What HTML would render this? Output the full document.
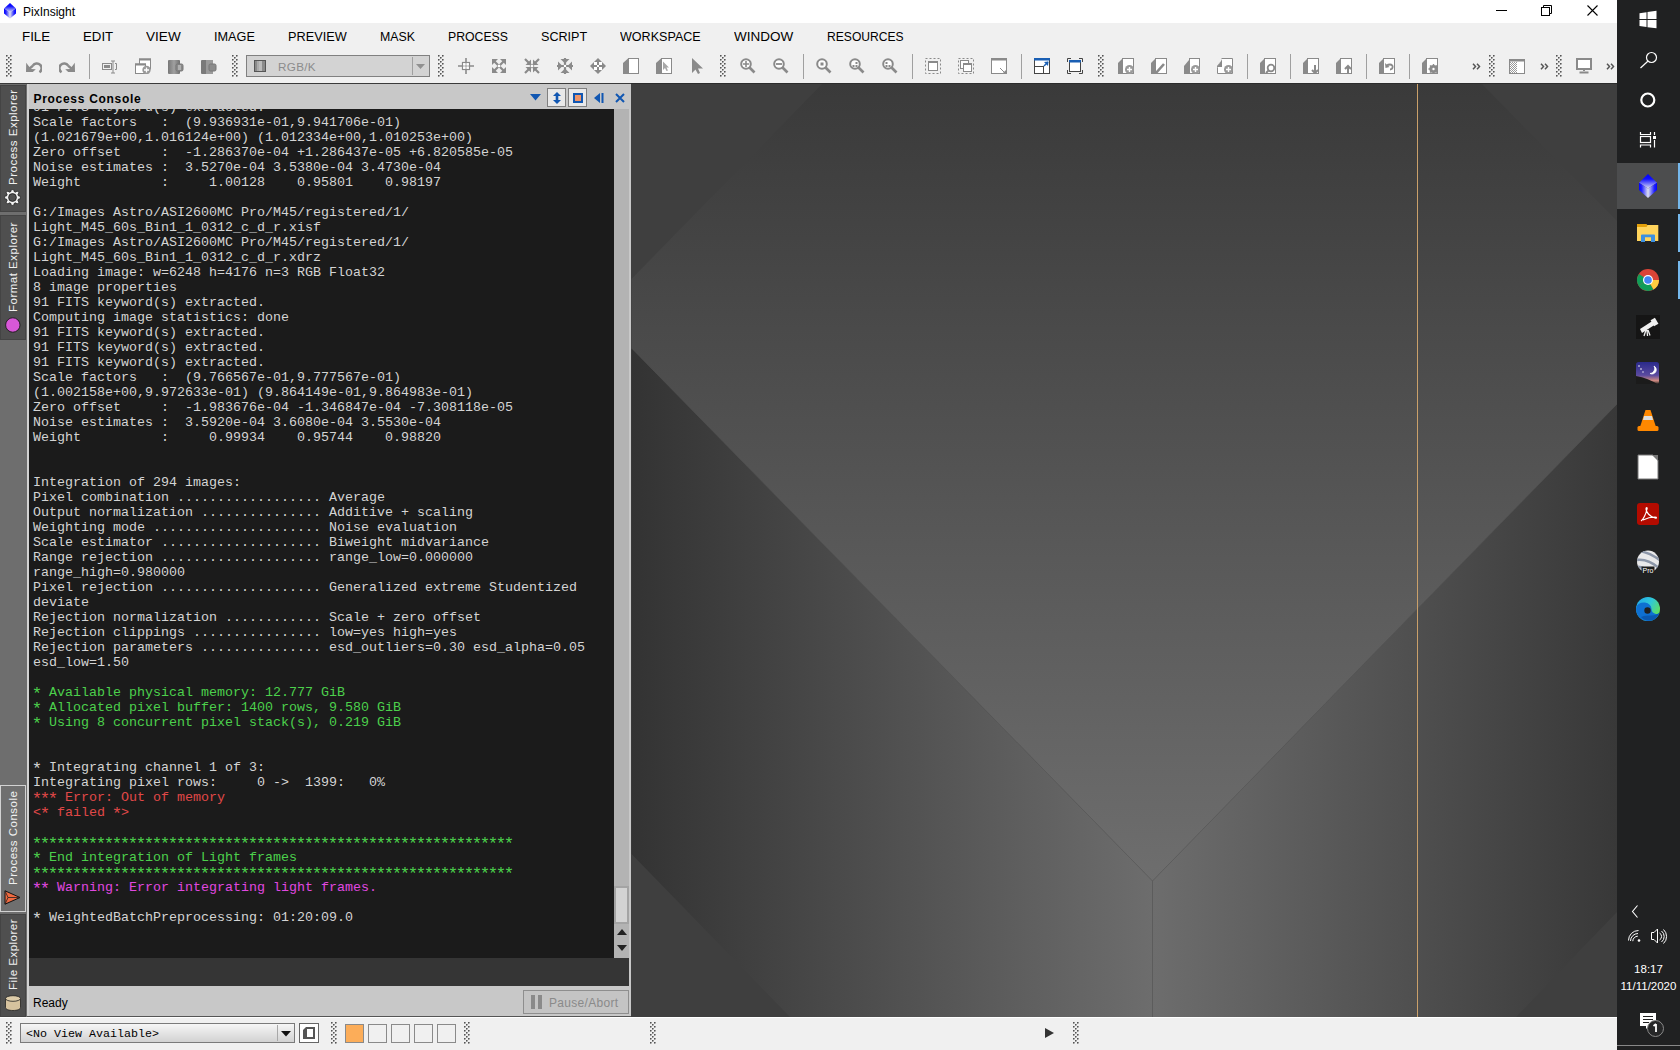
<!DOCTYPE html>
<html><head><meta charset="utf-8">
<style>
*{box-sizing:border-box}
html,body{margin:0;padding:0}
body{width:1680px;height:1050px;overflow:hidden;position:relative;background:#f0f0f0;font-family:"Liberation Sans",sans-serif}
.a{position:absolute}
#title{left:0;top:0;width:1617px;height:23px;background:#fff}
#title .t{left:23px;top:5px;font-size:12px;color:#000}
#menu{left:0;top:23px;width:1617px;height:60px;background:#f0f0f0}
.mi{position:absolute;top:6px;font-size:13px;color:#000;white-space:nowrap}
#taskbar{left:1617px;top:0;width:63px;height:1050px;background:#202122}
#left{left:0;top:83px;width:27px;height:934px;background:#6e6e6e;border-top:1px solid #3a3a3a}
.tab{left:0;width:26px;background:#4f4f4f;border:1px solid #444}
.tab.sel{background:#6f6f6f;border:1px solid #d2d2d2}
.vt{transform:rotate(-90deg);transform-origin:0 0;font-size:11.5px;letter-spacing:0.5px;color:#f0f0f0;white-space:nowrap;line-height:14px}
#panel{left:27px;top:83px;width:604px;height:934px;background:#c8c8c8}
#console{left:29px;top:109px;width:585px;height:849px;background:#1b1b1b;overflow:hidden}
#console pre{position:absolute;left:4px;top:-9px;margin:0;font-family:"Liberation Mono",monospace;font-size:13.333px;line-height:15px;color:#d4d4d4}
.s{font-style:normal;display:inline-block;width:8px;transform:translateY(2.3px) scale(1.3)}
.g{color:#4cd04c}.r{color:#e04848}.m{color:#e048e0}
#ws{left:631px;top:83px;width:986px;height:934px;background:#3e3e3e;overflow:hidden}
.grip{width:6px;background-image:linear-gradient(45deg,#666 25%,transparent 25%,transparent 75%,#666 75%),linear-gradient(45deg,#666 25%,#fff 25%,#fff 75%,#666 75%);background-size:4px 4px;background-position:0 0,2px 2px}
.pbtn{width:19px;height:19px;background:#e9e9e9;border:1px solid #808080}
.sq{top:7px;width:19px;height:19px;border:1px solid #8a8a8a;background:#f0f0f0}
#bottom{left:0;top:1017px;width:1617px;height:33px;background:#f0f0f0}
</style></head><body>
<div id="title" class="a"><div class="a t">PixInsight</div>
<svg class="a" style="left:0;top:0" width="22" height="22" viewBox="0 0 22 22"><defs><linearGradient id="c1t" x1="0" y1="0" x2="0" y2="1"><stop offset="0" stop-color="#0000ff"/><stop offset="0.35" stop-color="#1010ff"/><stop offset="1" stop-color="#d8dcf4"/></linearGradient><linearGradient id="c1l" x1="0" y1="0" x2="1" y2="0"><stop offset="0" stop-color="#0000ff"/><stop offset="0.3" stop-color="#2020ff"/><stop offset="1" stop-color="#dde0f2"/></linearGradient><linearGradient id="c1r" x1="1" y1="0" x2="0" y2="0"><stop offset="0" stop-color="#0000ff"/><stop offset="0.3" stop-color="#2020ff"/><stop offset="1" stop-color="#dde0f2"/></linearGradient></defs><polygon points="10.00,3.00 16.00,8.58 10.00,12.30 4.00,8.58" fill="url(#c1t)"/><polygon points="4.00,8.58 10.00,12.30 10.00,18.50 4.00,13.38" fill="url(#c1l)"/><polygon points="16.00,8.58 10.00,12.30 10.00,18.50 16.00,13.38" fill="url(#c1r)"/></svg>
<svg class="a" style="left:1496px;top:10px" width="11" height="1"><rect width="11" height="1" fill="#000"/></svg>
<svg class="a" style="left:1541px;top:5px" width="11" height="11" viewBox="0 0 11 11"><rect x="0.5" y="2.5" width="8" height="8" fill="none" stroke="#000"/><path d="M2.5 2.5V0.5h8v8h-2" fill="none" stroke="#000"/></svg>
<svg class="a" style="left:1587px;top:5px" width="11" height="11" viewBox="0 0 11 11"><path d="M0.5 0.5L10.5 10.5M10.5 0.5L0.5 10.5" stroke="#000" stroke-width="1.1"/></svg>
</div>
<div id="menu" class="a">
<span class="mi" style="left:22px;transform:scaleX(1.027);transform-origin:0 0">FILE</span>
<span class="mi" style="left:83px;transform:scaleX(1.019);transform-origin:0 0">EDIT</span>
<span class="mi" style="left:146px;transform:scaleX(1.044);transform-origin:0 0">VIEW</span>
<span class="mi" style="left:214px;transform:scaleX(0.977);transform-origin:0 0">IMAGE</span>
<span class="mi" style="left:288px;transform:scaleX(0.979);transform-origin:0 0">PREVIEW</span>
<span class="mi" style="left:380px;transform:scaleX(0.949);transform-origin:0 0">MASK</span>
<span class="mi" style="left:448px;transform:scaleX(0.943);transform-origin:0 0">PROCESS</span>
<span class="mi" style="left:541px;transform:scaleX(0.969);transform-origin:0 0">SCRIPT</span>
<span class="mi" style="left:620px;transform:scaleX(0.966);transform-origin:0 0">WORKSPACE</span>
<span class="mi" style="left:734px;transform:scaleX(1.038);transform-origin:0 0">WINDOW</span>
<span class="mi" style="left:827px;transform:scaleX(0.931);transform-origin:0 0">RESOURCES</span>
</div>
<svg width="0" height="0" style="position:absolute"><defs><pattern id="grp" width="4" height="4" patternUnits="userSpaceOnUse"><rect x="0" y="0" width="1.6" height="1.6" fill="#555"/><rect x="1.6" y="1.6" width="0.8" height="0.8" fill="#fff"/><rect x="2" y="2" width="1.6" height="1.6" fill="#555"/><rect x="3.6" y="3.6" width="0.4" height="0.4" fill="#fff"/></pattern><pattern id="chk" width="2" height="2" patternUnits="userSpaceOnUse"><rect width="2" height="2" fill="#fff"/><rect width="1" height="1" fill="#999"/><rect x="1" y="1" width="1" height="1" fill="#999"/></pattern></defs></svg>
<svg class="a" style="left:6px;top:55px" width="6" height="22"><rect width="6" height="22" fill="url(#grp)"/></svg>
<svg class="a" style="left:26px;top:58px" width="16" height="16" viewBox="0 0 16 16"><path d="M6.85 7.7A4.75 4.75 0 1 1 13.45 14.2" stroke="#8a8a8a" stroke-width="2.5" fill="none"/><path d="M3 11L7 7.6" stroke="#8a8a8a" stroke-width="2.5"/><polygon points="0,14 0.2,4.8 4.9,11.1 9.8,11.2 6.8,14" fill="#8a8a8a"/></svg>
<svg class="a" style="left:59px;top:58px" width="16" height="16" viewBox="0 0 16 16"><g transform="translate(16 0) scale(-1 1)"><path d="M6.85 7.7A4.75 4.75 0 1 1 13.45 14.2" stroke="#8a8a8a" stroke-width="2.5" fill="none"/><path d="M3 11L7 7.6" stroke="#8a8a8a" stroke-width="2.5"/><polygon points="0,14 0.2,4.8 4.9,11.1 9.8,11.2 6.8,14" fill="#8a8a8a"/></g></svg>
<div class="a" style="left:89px;top:54px;width:1px;height:25px;background:#a0a0a0"></div>
<svg class="a" style="left:102px;top:58px" width="16" height="16" viewBox="0 0 16 16"><rect x="0.5" y="5.5" width="9" height="6" fill="none" stroke="#8a8a8a"/><rect x="2" y="7" width="6" height="3" fill="#8a8a8a"/><path d="M9 3h4M11 3v12M9 15h4M13 5.5h1.5v6H13" stroke="#8a8a8a" stroke-width="1" fill="none"/></svg>
<svg class="a" style="left:135px;top:58px" width="16" height="16" viewBox="0 0 16 16"><rect x="4.5" y="1" width="11" height="10" fill="#fff" stroke="#8a8a8a"/><rect x="4" y="0.5" width="12" height="2" fill="#8a8a8a"/><rect x="0.5" y="6" width="10" height="9.5" fill="#fff" stroke="#8a8a8a"/><rect x="0" y="5.5" width="11" height="2" fill="#8a8a8a"/><circle cx="11.5" cy="12" r="4.2" fill="#999"/><path d="M9 12h5M11.5 9.5v5" stroke="#fff" stroke-width="1.3"/></svg>
<svg class="a" style="left:168px;top:58px" width="16" height="16" viewBox="0 0 16 16"><defs><linearGradient id="dg1" x1="0" x2="1"><stop offset="0" stop-color="#777"/><stop offset=".5" stop-color="#a0a0a0"/><stop offset="1" stop-color="#707070"/></linearGradient></defs><rect x="0" y="2" width="12" height="14" rx="1" fill="url(#dg1)"/><rect x="8" y="6" width="7" height="7" rx="1.5" fill="#8a8a8a" stroke="#777"/><rect x="10" y="7" width="3" height="5" fill="#b0b0b0"/></svg>
<svg class="a" style="left:201px;top:58px" width="16" height="16" viewBox="0 0 16 16"><rect x="0" y="2" width="12" height="14" rx="1" fill="#7a7a7a"/><rect x="5" y="2" width="7" height="14" fill="#9a9a9a"/><rect x="8" y="6" width="7" height="7" rx="1.5" fill="#8c8c8c" stroke="#777"/></svg>
<svg class="a" style="left:232px;top:55px" width="6" height="22"><rect width="6" height="22" fill="url(#grp)"/></svg>
<div class="a" style="left:246px;top:55px;width:184px;height:22px;background:#d3d3d3;border:1px solid #808080"></div>
<svg class="a" style="left:254px;top:60px" width="12" height="12" viewBox="0 0 12 12"><rect x="0.5" y="0.5" width="11" height="11" fill="#8a8a8a" stroke="#555"/><rect x="3" y="1" width="2" height="10" fill="#aaa"/><rect x="5" y="1" width="3" height="10" fill="#bbb"/></svg>
<div class="a" style="left:278px;top:60px;font-size:11.7px;letter-spacing:0.3px;color:#8c8c8c">RGB/K</div>
<div class="a" style="left:412px;top:57px;width:1px;height:18px;background:#a0a0a0"></div>
<svg class="a" style="left:416px;top:64px" width="9" height="5" viewBox="0 0 9 5"><polygon points="0,0 9,0 4.5,5" fill="#909090"/></svg>
<svg class="a" style="left:438px;top:55px" width="6" height="22"><rect width="6" height="22" fill="url(#grp)"/></svg>
<svg class="a" style="left:458px;top:58px" width="16" height="16" viewBox="0 0 16 16"><path d="M0 8h16M8 0v16" stroke="#8a8a8a" stroke-width="1.6"/><rect x="4.5" y="4.5" width="7" height="7" fill="none" stroke="#8a8a8a" stroke-width="1.2"/><rect x="5.2" y="5.2" width="2.4" height="2.4" fill="#fff"/><rect x="8.4" y="5.2" width="2.4" height="2.4" fill="#fff"/><rect x="5.2" y="8.4" width="2.4" height="2.4" fill="#fff"/><rect x="8.4" y="8.4" width="2.4" height="2.4" fill="#fff"/></svg>
<svg class="a" style="left:491px;top:58px" width="16" height="16" viewBox="0 0 16 16"><polygon points="1,1 7,1 1,7" fill="#8a8a8a"/><polygon points="15,1 9,1 15,7" fill="#8a8a8a"/><polygon points="1,15 7,15 1,9" fill="#8a8a8a"/><polygon points="15,15 9,15 15,9" fill="#8a8a8a"/><path d="M3 3L13 13M13 3L3 13" stroke="#8a8a8a" stroke-width="2.2"/><rect x="6.8" y="6.8" width="2.4" height="2.4" fill="#fff"/></svg>
<svg class="a" style="left:524px;top:58px" width="16" height="16" viewBox="0 0 16 16"><polygon points="7,7 7,1.5 1.5,7" fill="#8a8a8a"/><polygon points="9,7 9,1.5 14.5,7" fill="#8a8a8a"/><polygon points="7,9 7,14.5 1.5,9" fill="#8a8a8a"/><polygon points="9,9 9,14.5 14.5,9" fill="#8a8a8a"/><path d="M1 1L15 15M15 1L1 15" stroke="#8a8a8a" stroke-width="2.2"/><rect x="6.8" y="6.8" width="2.4" height="2.4" fill="#fff"/></svg>
<svg class="a" style="left:557px;top:58px" width="16" height="16" viewBox="0 0 16 16"><polygon points="3.5,1 12.5,1 8,5.5" fill="#8a8a8a"/><polygon points="3.5,15 12.5,15 8,10.5" fill="#8a8a8a"/><polygon points="1,3.5 1,12.5 5.5,8" fill="#8a8a8a"/><polygon points="15,3.5 15,12.5 10.5,8" fill="#8a8a8a"/><path d="M8 0v16M0 8h16" stroke="#8a8a8a" stroke-width="2.2"/><rect x="6.9" y="6.9" width="2.2" height="2.2" fill="#fff"/></svg>
<svg class="a" style="left:590px;top:58px" width="16" height="16" viewBox="0 0 16 16"><polygon points="8,0 16,8 8,16 0,8" fill="#8a8a8a"/><rect x="4" y="4" width="3" height="3" fill="#fff"/><rect x="9" y="4" width="3" height="3" fill="#fff"/><rect x="4" y="9" width="3" height="3" fill="#fff"/><rect x="9" y="9" width="3" height="3" fill="#fff"/><rect x="7" y="7" width="2" height="2" fill="#fff"/></svg>
<svg class="a" style="left:623px;top:58px" width="16" height="16" viewBox="0 0 16 16"><polygon points="0,5 5,0.5 5,16 0,16" fill="#8a8a8a"/><rect x="5.5" y="0.5" width="10" height="15" fill="#fff" stroke="#8a8a8a"/></svg>
<svg class="a" style="left:656px;top:58px" width="16" height="16" viewBox="0 0 16 16"><polygon points="0,5 5,0.5 5,16 0,16" fill="#8a8a8a"/><rect x="5.5" y="0.5" width="10" height="15" fill="#fff" stroke="#8a8a8a"/><polygon points="7,3.5 7,12 9,10 10.5,13 12,12.5 10.5,9.5 13,9.5" fill="#a8a8a8"/></svg>
<svg class="a" style="left:689px;top:58px" width="16" height="16" viewBox="0 0 16 16"><polygon points="3,0 3,15 6.5,11.5 9,16 11,15 9,10.5 14,10.5" fill="#8a8a8a"/></svg>
<svg class="a" style="left:720px;top:55px" width="6" height="22"><rect width="6" height="22" fill="url(#grp)"/></svg>
<svg class="a" style="left:740px;top:58px" width="16" height="16" viewBox="0 0 16 16"><circle cx="6" cy="6" r="4.8" fill="#fff" stroke="#8a8a8a" stroke-width="2"/><path d="M9.5 9.5L14.5 14.5" stroke="#8a8a8a" stroke-width="2.6"/><path d="M3 6h6M6 3v6" stroke="#8a8a8a" stroke-width="1.6"/></svg>
<svg class="a" style="left:773px;top:58px" width="16" height="16" viewBox="0 0 16 16"><circle cx="6" cy="6" r="4.8" fill="#fff" stroke="#8a8a8a" stroke-width="2"/><path d="M9.5 9.5L14.5 14.5" stroke="#8a8a8a" stroke-width="2.6"/><path d="M3 6h6" stroke="#8a8a8a" stroke-width="1.8"/></svg>
<div class="a" style="left:803px;top:54px;width:1px;height:25px;background:#a0a0a0"></div>
<svg class="a" style="left:816px;top:58px" width="16" height="16" viewBox="0 0 16 16"><circle cx="6" cy="6" r="4.8" fill="#fff" stroke="#8a8a8a" stroke-width="2"/><path d="M9.5 9.5L14.5 14.5" stroke="#8a8a8a" stroke-width="2.6"/><rect x="4.5" y="4.5" width="3" height="3" fill="#8a8a8a"/></svg>
<svg class="a" style="left:849px;top:58px" width="16" height="16" viewBox="0 0 16 16"><circle cx="6" cy="6" r="4.8" fill="#fff" stroke="#8a8a8a" stroke-width="2"/><path d="M9.5 9.5L14.5 14.5" stroke="#8a8a8a" stroke-width="2.6"/><rect x="6.5" y="4" width="2" height="2" fill="#8a8a8a"/><rect x="3.5" y="7" width="2" height="2" fill="#8a8a8a"/><rect x="6.5" y="7" width="2" height="2" fill="#8a8a8a"/></svg>
<svg class="a" style="left:882px;top:58px" width="16" height="16" viewBox="0 0 16 16"><circle cx="6" cy="6" r="4.8" fill="#fff" stroke="#8a8a8a" stroke-width="2"/><path d="M9.5 9.5L14.5 14.5" stroke="#8a8a8a" stroke-width="2.6"/><rect x="3.5" y="4" width="2" height="2" fill="#8a8a8a"/><rect x="3.5" y="7" width="2" height="2" fill="#8a8a8a"/><rect x="6.5" y="7" width="2" height="2" fill="#8a8a8a"/></svg>
<div class="a" style="left:912px;top:54px;width:1px;height:25px;background:#a0a0a0"></div>
<svg class="a" style="left:925px;top:58px" width="16" height="16" viewBox="0 0 16 16"><rect x="0.5" y="0.5" width="15" height="15" fill="none" stroke="#8a8a8a" stroke-dasharray="2 2"/><rect x="3.5" y="3.5" width="9" height="9" fill="#fff" stroke="#8a8a8a"/><rect x="3" y="3" width="10" height="2" fill="#8a8a8a"/></svg>
<svg class="a" style="left:958px;top:58px" width="16" height="16" viewBox="0 0 16 16"><rect x="0.5" y="0.5" width="15" height="15" fill="none" stroke="#8a8a8a" stroke-dasharray="2 2"/><rect x="2.5" y="2.5" width="8" height="8" fill="#fff" stroke="#8a8a8a"/><rect x="5.5" y="5.5" width="8" height="8" fill="#fff" stroke="#8a8a8a"/><rect x="5" y="5" width="9" height="2" fill="#8a8a8a"/></svg>
<svg class="a" style="left:991px;top:58px" width="16" height="16" viewBox="0 0 16 16"><rect x="0.5" y="0.5" width="15" height="15" fill="#fff" stroke="#8a8a8a"/><rect x="0" y="0" width="16" height="2.5" fill="#8a8a8a"/><path d="M9 10l4 4" stroke="#8a8a8a" stroke-width="1"/><polygon points="16,11 16,16 11,16" fill="#8a8a8a"/></svg>
<div class="a" style="left:1021px;top:54px;width:1px;height:25px;background:#a0a0a0"></div>
<svg class="a" style="left:1034px;top:58px" width="16" height="16" viewBox="0 0 16 16"><rect x="0.5" y="0.5" width="15" height="15" fill="#fff" stroke="#444"/><rect x="0" y="0" width="16" height="2.5" fill="#1a5fb4"/><rect x="0.5" y="8.5" width="9" height="7" fill="none" stroke="#444"/><path d="M10 8l4-4" stroke="#1a5fb4" stroke-width="1.5"/><polygon points="10,4 14.5,3.5 14,8" fill="#1a5fb4"/></svg>
<svg class="a" style="left:1067px;top:58px" width="16" height="16" viewBox="0 0 16 16"><path d="M0.5 4V0.5H4M12 0.5h3.5V4M15.5 12v3.5H12M4 15.5H0.5V12" stroke="#444" fill="none"/><rect x="2.5" y="2.5" width="11" height="11" fill="#fff" stroke="#444"/><rect x="2" y="2" width="12" height="2.5" fill="#1a5fb4"/></svg>
<svg class="a" style="left:1098px;top:55px" width="6" height="22"><rect width="6" height="22" fill="url(#grp)"/></svg>
<svg class="a" style="left:1118px;top:58px" width="16" height="16" viewBox="0 0 16 16"><polygon points="0,5 4.5,0.5 4.5,16 0,16" fill="#8a8a8a"/><rect x="4.5" y="0.5" width="11" height="15" fill="#fff" stroke="#8a8a8a"/><circle cx="11.5" cy="11.5" r="4.5" fill="#9a9a9a"/><path d="M9 11.5h5M11.5 9v5" stroke="#fff" stroke-width="1.4"/></svg>
<svg class="a" style="left:1151px;top:58px" width="16" height="16" viewBox="0 0 16 16"><polygon points="0,5 4.5,0.5 4.5,16 0,16" fill="#8a8a8a"/><rect x="4.5" y="0.5" width="11" height="15" fill="#fff" stroke="#8a8a8a"/><path d="M4.5 15.5L13 6" stroke="#8a8a8a" stroke-width="2.6"/><path d="M3.5 16l1.5-2" stroke="#8a8a8a" stroke-width="1"/></svg>
<svg class="a" style="left:1184px;top:58px" width="16" height="16" viewBox="0 0 16 16"><polygon points="0,8 5,2 5,16 0,16" fill="#8a8a8a"/><rect x="5.5" y="0.5" width="10" height="15" fill="#fff" stroke="#8a8a8a"/><circle cx="11.5" cy="11.5" r="4.5" fill="#9a9a9a"/><path d="M9 11.5h5M11.5 9v5" stroke="#fff" stroke-width="1.4"/></svg>
<svg class="a" style="left:1217px;top:58px" width="16" height="16" viewBox="0 0 16 16"><polygon points="0,8 4,3 4,10 0,10" fill="#8a8a8a"/><path d="M4.5 0.5h11v15h-15v-6" fill="#fff" stroke="#8a8a8a"/><polygon points="0,9 4,3 5,1 5,9" fill="#8a8a8a"/><circle cx="11.5" cy="11.5" r="4.5" fill="#9a9a9a"/><path d="M9 11.5h5M11.5 9v5" stroke="#fff" stroke-width="1.4"/></svg>
<div class="a" style="left:1247px;top:54px;width:1px;height:25px;background:#a0a0a0"></div>
<svg class="a" style="left:1260px;top:58px" width="16" height="16" viewBox="0 0 16 16"><polygon points="0,5 4.5,0.5 4.5,16 0,16" fill="#8a8a8a"/><rect x="4.5" y="0.5" width="11" height="15" fill="#fff" stroke="#8a8a8a"/><circle cx="11" cy="10" r="3.3" fill="#fff" stroke="#8a8a8a" stroke-width="1.8"/><path d="M8.5 12.5L6 15" stroke="#8a8a8a" stroke-width="2"/></svg>
<div class="a" style="left:1290px;top:54px;width:1px;height:25px;background:#a0a0a0"></div>
<svg class="a" style="left:1303px;top:58px" width="16" height="16" viewBox="0 0 16 16"><polygon points="0,5 4.5,0.5 4.5,16 0,16" fill="#8a8a8a"/><rect x="4.5" y="0.5" width="11" height="15" fill="#fff" stroke="#8a8a8a"/><path d="M12 7v8M9 12l3 3 3-3" stroke="#8a8a8a" stroke-width="2" fill="none"/></svg>
<svg class="a" style="left:1336px;top:58px" width="16" height="16" viewBox="0 0 16 16"><polygon points="0,5 4.5,0.5 4.5,16 0,16" fill="#8a8a8a"/><rect x="4.5" y="0.5" width="11" height="15" fill="#fff" stroke="#8a8a8a"/><path d="M12 16V8M9 11l3-3 3 3" stroke="#8a8a8a" stroke-width="2" fill="none"/></svg>
<div class="a" style="left:1366px;top:54px;width:1px;height:25px;background:#a0a0a0"></div>
<svg class="a" style="left:1379px;top:58px" width="16" height="16" viewBox="0 0 16 16"><polygon points="0,5 4.5,0.5 4.5,16 0,16" fill="#8a8a8a"/><rect x="4.5" y="0.5" width="11" height="15" fill="#fff" stroke="#8a8a8a"/><path d="M11 11.5c3 0 4-5 0-5-2 0-3 1-3 1" stroke="#8a8a8a" stroke-width="1.8" fill="none"/><polygon points="6,5 6.5,10 10.5,9" fill="#8a8a8a"/></svg>
<div class="a" style="left:1409px;top:54px;width:1px;height:25px;background:#a0a0a0"></div>
<svg class="a" style="left:1422px;top:58px" width="16" height="16" viewBox="0 0 16 16"><polygon points="0,5 4.5,0.5 4.5,16 0,16" fill="#8a8a8a"/><rect x="4.5" y="0.5" width="11" height="15" fill="#fff" stroke="#8a8a8a"/><circle cx="11.5" cy="11" r="3" fill="none" stroke="#8a8a8a" stroke-width="2.2"/><path d="M11.5 6v10M6.5 11h10M8 7.5l7 7M15 7.5l-7 7" stroke="#8a8a8a" stroke-width="1.4"/><circle cx="11.5" cy="11" r="1.2" fill="#fff"/></svg>
<svg class="a" style="left:1472px;top:63px" width="9" height="7" viewBox="0 0 9 7"><path d="M1 0.8l2.5 2.7L1 6.2M5 0.8l2.5 2.7L5 6.2" stroke="#555" stroke-width="1.5" fill="none"/></svg>
<svg class="a" style="left:1489px;top:55px" width="6" height="22"><rect width="6" height="22" fill="url(#grp)"/></svg>
<svg class="a" style="left:1509px;top:59px" width="16" height="16" viewBox="0 0 16 16"><rect x="0.5" y="0.5" width="15" height="14" fill="#fff" stroke="#8a8a8a"/><rect x="0" y="0" width="16" height="2.5" fill="#8a8a8a"/><rect x="1" y="3" width="7" height="11" fill="url(#chk)"/></svg>
<svg class="a" style="left:1540px;top:63px" width="9" height="7" viewBox="0 0 9 7"><path d="M1 0.8l2.5 2.7L1 6.2M5 0.8l2.5 2.7L5 6.2" stroke="#555" stroke-width="1.5" fill="none"/></svg>
<svg class="a" style="left:1556px;top:55px" width="6" height="22"><rect width="6" height="22" fill="url(#grp)"/></svg>
<svg class="a" style="left:1576px;top:58px" width="16" height="16" viewBox="0 0 16 16"><rect x="1" y="1" width="14" height="10" fill="#fff" stroke="#8a8a8a" stroke-width="2"/><rect x="7" y="11" width="2" height="2" fill="#8a8a8a"/><rect x="3.5" y="13.5" width="9" height="2" fill="#8a8a8a"/></svg>
<svg class="a" style="left:1606px;top:63px" width="9" height="7" viewBox="0 0 9 7"><path d="M1 0.8l2.5 2.7L1 6.2M5 0.8l2.5 2.7L5 6.2" stroke="#555" stroke-width="1.5" fill="none"/></svg>
<div id="left" class="a">
<div class="a tab" style="top:1px;height:127px"></div>
<div class="a tab" style="top:131px;height:124.6px"></div>
<div class="a tab sel" style="top:701px;height:127px"></div>
<div class="a tab" style="top:830px;height:103px"></div>
<div class="a vt" style="left:6px;top:101px">Process Explorer</div>
<div class="a vt" style="left:6px;top:228px">Format Explorer</div>
<div class="a vt" style="left:6px;top:801px">Process Console</div>
<div class="a vt" style="left:6px;top:906px">File Explorer</div>
<svg class="a" style="left:4px;top:105px" width="17" height="17" viewBox="0 0 17 17"><polygon points="16.40,7.25 16.40,9.75 14.51,10.04 13.84,11.66 14.97,13.20 13.20,14.97 11.66,13.84 10.04,14.51 9.75,16.40 7.25,16.40 6.96,14.51 5.34,13.84 3.80,14.97 2.03,13.20 3.16,11.66 2.49,10.04 0.60,9.75 0.60,7.25 2.49,6.96 3.16,5.34 2.03,3.80 3.80,2.03 5.34,3.16 6.96,2.49 7.25,0.60 9.75,0.60 10.04,2.49 11.66,3.16 13.20,2.03 14.97,3.80 13.84,5.34 14.51,6.96" fill="#f2f2f2" stroke="#1a1a1a" stroke-width="0.7"/><circle cx="8.5" cy="8.5" r="3.9" fill="#4f4f4f" stroke="#1a1a1a" stroke-width="0.8"/></svg>
<svg class="a" style="left:4.5px;top:233px" width="16" height="16" viewBox="0 0 16 16"><circle cx="7.8" cy="8" r="7.2" fill="#d858d8" stroke="#111" stroke-width="0.8"/></svg>
<svg class="a" style="left:4px;top:806px" width="17" height="15" viewBox="0 0 17 15"><polygon points="1,0.8 16,7.5 1,14.2" fill="#f06a40" stroke="#111" stroke-width="1"/><path d="M1 0.8L4 7.5L1 14.2M4 7.5H16" stroke="#222" stroke-width="0.8" fill="none"/></svg>
<svg class="a" style="left:5px;top:911px" width="16" height="16" viewBox="0 0 16 16"><path d="M0.5 3.5v9c0 1.8 3.3 3 7.5 3s7.5-1.2 7.5-3v-9" fill="#d6c29e" stroke="#222" stroke-width="0.8"/><ellipse cx="8" cy="3.5" rx="7.5" ry="2.8" fill="#dccba8" stroke="#222" stroke-width="0.8"/></svg>
</div>
<div id="panel" class="a">
<div class="a" style="left:0;top:0;width:604px;height:1px;background:#3a3a3a"></div>
<div class="a" style="left:0;top:1px;width:2px;height:933px;background:#d2d2d2"></div>
<div class="a" style="left:6.5px;top:9px;font-weight:bold;font-size:12px;letter-spacing:0.7px">Process Console</div>
<svg class="a" style="left:503px;top:11px" width="12" height="7" viewBox="0 0 12 7"><polygon points="0,0 11,0 5.5,6.5" fill="#1157b2"/></svg>
<div class="a pbtn" style="left:520px;top:5px"></div>
<svg class="a" style="left:526px;top:9px" width="8" height="12" viewBox="0 0 8 12"><polygon points="4,0 8,4 5.3,4 5.3,8 8,8 4,12 0,8 2.7,8 2.7,4 0,4" fill="#1157b2"/></svg>
<div class="a pbtn" style="left:541px;top:5px"></div>
<svg class="a" style="left:546px;top:10px" width="10" height="10" viewBox="0 0 10 10"><rect x="1" y="1" width="8" height="8" fill="#ee9468" stroke="#1157b2" stroke-width="2"/></svg>
<svg class="a" style="left:567px;top:10px" width="10" height="10" viewBox="0 0 10 10"><polygon points="0,5 6,0 6,10" fill="#1157b2"/><rect x="7.5" y="0" width="2" height="10" fill="#1157b2"/></svg>
<svg class="a" style="left:588px;top:10px" width="10" height="10" viewBox="0 0 10 10"><path d="M1 1L9 9M9 1L1 9" stroke="#1157b2" stroke-width="2"/></svg>
<div class="a" style="left:587px;top:26px;width:15px;height:849px;background:#b3b3b3"></div>
<div class="a" style="left:587px;top:803px;width:15px;height:38px;background:#d3d3d3;border:2px solid #a4a4a4"></div>
<svg class="a" style="left:590px;top:846px" width="10" height="6" viewBox="0 0 10 6"><polygon points="0,6 10,6 5,0" fill="#222"/></svg>
<svg class="a" style="left:590px;top:862px" width="10" height="6" viewBox="0 0 10 6"><polygon points="0,0 10,0 5,6" fill="#222"/></svg>
<div class="a" style="left:2px;top:875px;width:600px;height:28px;background:#353535"></div>
<div class="a" style="left:6px;top:913px;font-size:12px;color:#000">Ready</div>
<div class="a" style="left:496px;top:907px;width:106px;height:24px;border:1px solid #8e8e8e;background:#c4c4c4"></div>
<div class="a" style="left:504px;top:912px;width:4px;height:14px;background:#8a8a8a"></div>
<div class="a" style="left:511px;top:912px;width:4px;height:14px;background:#8a8a8a"></div>
<div class="a" style="left:522px;top:913px;font-size:12px;letter-spacing:0.3px;color:#8a8a8a">Pause/Abort</div>
<div class="a" style="left:0;top:933px;width:604px;height:1px;background:#555"></div>
</div>
<div id="console" class="a"><pre>91 FITS keyword(s) extracted.
Scale factors   :  (9.936931e-01,9.941706e-01)
(1.021679e+00,1.016124e+00) (1.012334e+00,1.010253e+00)
Zero offset     :  -1.286370e-04 +1.286437e-05 +6.820585e-05
Noise estimates :  3.5270e-04 3.5380e-04 3.4730e-04
Weight          :     1.00128    0.95801    0.98197

G:/Images Astro/ASI2600MC Pro/M45/registered/1/
Light_M45_60s_Bin1_1_0312_c_d_r.xisf
G:/Images Astro/ASI2600MC Pro/M45/registered/1/
Light_M45_60s_Bin1_1_0312_c_d_r.xdrz
Loading image: w=6248 h=4176 n=3 RGB Float32
8 image properties
91 FITS keyword(s) extracted.
Computing image statistics: done
91 FITS keyword(s) extracted.
91 FITS keyword(s) extracted.
91 FITS keyword(s) extracted.
Scale factors   :  (9.766567e-01,9.777567e-01)
(1.002158e+00,9.972633e-01) (9.864149e-01,9.864983e-01)
Zero offset     :  -1.983676e-04 -1.346847e-04 -7.308118e-05
Noise estimates :  3.5920e-04 3.6080e-04 3.5530e-04
Weight          :     0.99934    0.95744    0.98820


Integration of 294 images:
Pixel combination .................. Average
Output normalization ............... Additive + scaling
Weighting mode ..................... Noise evaluation
Scale estimator .................... Biweight midvariance
Range rejection .................... range_low=0.000000
range_high=0.980000
Pixel rejection .................... Generalized extreme Studentized
deviate
Rejection normalization ............ Scale + zero offset
Rejection clippings ................ low=yes high=yes
Rejection parameters ............... esd_outliers=0.30 esd_alpha=0.05
esd_low=1.50

<span class="g"><i class="s">*</i> Available physical memory: 12.777 GiB
<i class="s">*</i> Allocated pixel buffer: 1400 rows, 9.580 GiB
<i class="s">*</i> Using 8 concurrent pixel stack(s), 0.219 GiB</span>


<i class="s">*</i> Integrating channel 1 of 3:
Integrating pixel rows:     0 ->  1399:   0%
<span class="r"><i class="s">*</i><i class="s">*</i><i class="s">*</i> Error: Out of memory
&lt;<i class="s">*</i> failed <i class="s">*</i>&gt;</span>

<span class="g"><i class="s">*</i><i class="s">*</i><i class="s">*</i><i class="s">*</i><i class="s">*</i><i class="s">*</i><i class="s">*</i><i class="s">*</i><i class="s">*</i><i class="s">*</i><i class="s">*</i><i class="s">*</i><i class="s">*</i><i class="s">*</i><i class="s">*</i><i class="s">*</i><i class="s">*</i><i class="s">*</i><i class="s">*</i><i class="s">*</i><i class="s">*</i><i class="s">*</i><i class="s">*</i><i class="s">*</i><i class="s">*</i><i class="s">*</i><i class="s">*</i><i class="s">*</i><i class="s">*</i><i class="s">*</i><i class="s">*</i><i class="s">*</i><i class="s">*</i><i class="s">*</i><i class="s">*</i><i class="s">*</i><i class="s">*</i><i class="s">*</i><i class="s">*</i><i class="s">*</i><i class="s">*</i><i class="s">*</i><i class="s">*</i><i class="s">*</i><i class="s">*</i><i class="s">*</i><i class="s">*</i><i class="s">*</i><i class="s">*</i><i class="s">*</i><i class="s">*</i><i class="s">*</i><i class="s">*</i><i class="s">*</i><i class="s">*</i><i class="s">*</i><i class="s">*</i><i class="s">*</i><i class="s">*</i><i class="s">*</i>
<i class="s">*</i> End integration of Light frames
<i class="s">*</i><i class="s">*</i><i class="s">*</i><i class="s">*</i><i class="s">*</i><i class="s">*</i><i class="s">*</i><i class="s">*</i><i class="s">*</i><i class="s">*</i><i class="s">*</i><i class="s">*</i><i class="s">*</i><i class="s">*</i><i class="s">*</i><i class="s">*</i><i class="s">*</i><i class="s">*</i><i class="s">*</i><i class="s">*</i><i class="s">*</i><i class="s">*</i><i class="s">*</i><i class="s">*</i><i class="s">*</i><i class="s">*</i><i class="s">*</i><i class="s">*</i><i class="s">*</i><i class="s">*</i><i class="s">*</i><i class="s">*</i><i class="s">*</i><i class="s">*</i><i class="s">*</i><i class="s">*</i><i class="s">*</i><i class="s">*</i><i class="s">*</i><i class="s">*</i><i class="s">*</i><i class="s">*</i><i class="s">*</i><i class="s">*</i><i class="s">*</i><i class="s">*</i><i class="s">*</i><i class="s">*</i><i class="s">*</i><i class="s">*</i><i class="s">*</i><i class="s">*</i><i class="s">*</i><i class="s">*</i><i class="s">*</i><i class="s">*</i><i class="s">*</i><i class="s">*</i><i class="s">*</i><i class="s">*</i></span>
<span class="m"><i class="s">*</i><i class="s">*</i> Warning: Error integrating light frames.</span>

<i class="s">*</i> WeightedBatchPreprocessing: 01:20:09.0
</pre></div>
<div id="ws" class="a"><svg width="986" height="934" viewBox="631 83 986 934" style="position:absolute;left:0;top:0">
<defs>
<linearGradient id="gv" x1="0" y1="84" x2="0" y2="881" gradientUnits="userSpaceOnUse"><stop offset="0" stop-color="#3a3a3a"/><stop offset="1" stop-color="#6e6e6e"/></linearGradient>
<linearGradient id="gl" x1="631" y1="0" x2="1152.5" y2="0" gradientUnits="userSpaceOnUse"><stop offset="0" stop-color="#333333"/><stop offset="1" stop-color="#6d6d6d"/></linearGradient>
<linearGradient id="gr" x1="1152.5" y1="0" x2="1617" y2="0" gradientUnits="userSpaceOnUse"><stop offset="0" stop-color="#6d6d6d"/><stop offset="1" stop-color="#383838"/></linearGradient>
</defs>
<rect x="631" y="83" width="986" height="934" fill="#3f3f3f"/>
<polygon points="823,83 1481,83 1617,221 1617,404 1152.5,881 631.5,348 631.5,279" fill="url(#gv)"/>
<polygon points="631.5,348 1152.5,881 1152.5,1017 790,1017 631.5,854" fill="url(#gl)"/>
<polygon points="1152.5,881 1617,404 1617,912 1516,1017 1152.5,1017" fill="url(#gr)"/>
<polyline points="631.5,348 1152.5,881 1617,404" fill="none" stroke="#5a5a5a" stroke-opacity="0.5" stroke-width="1"/>
<line x1="1152.5" y1="881" x2="1152.5" y2="1017" stroke="#5a5a5a" stroke-opacity="0.7" stroke-width="1"/>
<line x1="1417.5" y1="84" x2="1417.5" y2="1017" stroke="#caa06a" stroke-width="1"/>
<rect x="631" y="83" width="986" height="1" fill="#2c2c2c"/>
</svg></div>
<div id="bottom" class="a">
<div class="a" style="left:0;top:0;width:1617px;height:1px;background:#fff"></div>
<svg class="a" style="left:6px;top:5px" width="6" height="22"><rect width="6" height="22" fill="url(#grp)"/></svg><svg class="a" style="left:331px;top:5px" width="6" height="22"><rect width="6" height="22" fill="url(#grp)"/></svg><svg class="a" style="left:464px;top:5px" width="6" height="22"><rect width="6" height="22" fill="url(#grp)"/></svg><svg class="a" style="left:650px;top:5px" width="6" height="22"><rect width="6" height="22" fill="url(#grp)"/></svg><svg class="a" style="left:1073px;top:5px" width="6" height="22"><rect width="6" height="22" fill="url(#grp)"/></svg>
<div class="a" style="left:20px;top:6px;width:275px;height:20px;border:1px solid #7a7a7a;background:linear-gradient(#f6f6f6,#d2d2d2)"></div>
<div class="a" style="left:26px;top:8px;font-family:'Liberation Mono',monospace;font-size:11.67px;line-height:18px;color:#000">&lt;No View Available&gt;</div>
<div class="a" style="left:277px;top:8px;width:1px;height:16px;background:#a8a8a8"></div>
<svg class="a" style="left:281px;top:14px" width="10" height="6" viewBox="0 0 10 6"><polygon points="0,0 10,0 5,5.5" fill="#111"/></svg>
<div class="a" style="left:299px;top:6px;width:20px;height:20px;border:1px solid #666;background:#fff"></div>
<svg class="a" style="left:303px;top:10px" width="12" height="12" viewBox="0 0 12 12"><polygon points="0,3 3,0 12,0 12,12 0,12" fill="#555"/><rect x="4" y="2" width="6" height="8" fill="#fff"/></svg>
<div class="a sq" style="left:345px;background:#fcad59"></div>
<div class="a sq" style="left:368px"></div>
<div class="a sq" style="left:391px"></div>
<div class="a sq" style="left:414px"></div>
<div class="a sq" style="left:437px"></div>
<svg class="a" style="left:1045px;top:11px" width="9" height="10" viewBox="0 0 9 10"><polygon points="0,0 9,5 0,10" fill="#333"/></svg>
</div>
<div id="taskbar" class="a">
<svg class="a" style="left:0;top:0" width="63" height="1050" viewBox="1617 0 63 1050">
<!-- windows logo -->
<polygon points="1639.5,13.2 1646.5,12.2 1646.5,19 1639.5,19" fill="#fff"/>
<polygon points="1647.5,12 1656.5,10.8 1656.5,19 1647.5,19" fill="#fff"/>
<polygon points="1639.5,20 1646.5,20 1646.5,27 1639.5,26" fill="#fff"/>
<polygon points="1647.5,20 1656.5,20 1656.5,28.2 1647.5,27.2" fill="#fff"/>
<!-- search -->
<circle cx="1651.5" cy="57.5" r="5" fill="none" stroke="#fff" stroke-width="1.2"/>
<path d="M1647.8 61.2L1640.5 68" stroke="#fff" stroke-width="1.2"/>
<!-- cortana -->
<circle cx="1647.8" cy="100" r="6.5" fill="none" stroke="#fff" stroke-width="2.2"/>
<!-- task view -->
<path d="M1640.5 132v2.5h10v-2.5M1640.5 147.5v-2.5h10v2.5" fill="none" stroke="#fff" stroke-width="1.2"/>
<rect x="1640.5" y="136.5" width="10" height="6" fill="none" stroke="#fff" stroke-width="1.2"/>
<path d="M1654.5 132v3M1654.5 140v7.5" stroke="#fff" stroke-width="1.2"/>
<rect x="1653" y="136" width="3" height="3" fill="#fff"/>
<!-- pixinsight selected -->
<rect x="1617" y="163" width="61" height="46" fill="#4c4d4e"/>
<rect x="1678" y="163" width="2" height="46" fill="#76b9ed"/>
<rect x="1678" y="214" width="2" height="38" fill="#76b9ed"/>
<rect x="1678" y="261" width="2" height="38" fill="#76b9ed"/>
<defs>
<linearGradient id="pig" x1="0" y1="0" x2="0" y2="1"><stop offset="0" stop-color="#1a1aff"/><stop offset="0.5" stop-color="#3535ff"/><stop offset="1" stop-color="#e0e0ff"/></linearGradient>
<linearGradient id="stg" x1="0" y1="0" x2="0" y2="1"><stop offset="0" stop-color="#2a2a8a"/><stop offset="0.6" stop-color="#5a4aa0"/><stop offset="0.85" stop-color="#d08a80"/><stop offset="1" stop-color="#222"/></linearGradient>
<linearGradient id="edg" x1="0" y1="0" x2="1" y2="1"><stop offset="0" stop-color="#3dd27a"/><stop offset="0.5" stop-color="#1ba1e2"/><stop offset="1" stop-color="#0c59a4"/></linearGradient>
</defs>
<defs><linearGradient id="c2t" x1="0" y1="0" x2="0" y2="1"><stop offset="0" stop-color="#0000ff"/><stop offset="0.35" stop-color="#1010ff"/><stop offset="1" stop-color="#d8dcf4"/></linearGradient><linearGradient id="c2l" x1="0" y1="0" x2="1" y2="0"><stop offset="0" stop-color="#0000ff"/><stop offset="0.3" stop-color="#2020ff"/><stop offset="1" stop-color="#dde0f2"/></linearGradient><linearGradient id="c2r" x1="1" y1="0" x2="0" y2="0"><stop offset="0" stop-color="#0000ff"/><stop offset="0.3" stop-color="#2020ff"/><stop offset="1" stop-color="#dde0f2"/></linearGradient></defs><polygon points="1648.00,174.00 1657.00,182.64 1648.00,188.40 1639.00,182.64" fill="url(#c2t)"/><polygon points="1639.00,182.64 1648.00,188.40 1648.00,198.00 1639.00,190.08" fill="url(#c2l)"/><polygon points="1657.00,182.64 1648.00,188.40 1648.00,198.00 1657.00,190.08" fill="url(#c2r)"/>
<!-- explorer -->
<rect x="1637" y="225" width="21.3" height="16" fill="#ffd45c"/>
<polygon points="1637,224 1646.5,224 1647.5,225.5 1646.5,227 1637,227" fill="#e3a00a"/>
<path d="M1641 242v-6.5a1 1 0 0 1 1-1h12a1 1 0 0 1 1 1V242h-4v-4.8h-6V242z" fill="#3d90e0"/>
<!-- chrome -->
<circle cx="1648" cy="280" r="11" fill="#db4437"/>
<path d="M1648 280L1638.5 285.5A11 11 0 0 0 1653.5 289.5Z" fill="#0f9d58"/>
<path d="M1648 280L1653.5 289.5A11 11 0 0 0 1659 280H1648Z" fill="#ffcd40"/>
<path d="M1648 280L1638.5 285.5A11 11 0 0 1 1639 274Z" fill="#0f9d58"/>
<circle cx="1648" cy="280" r="5" fill="#fff"/>
<circle cx="1648" cy="280" r="3.8" fill="#4285f4"/>
<!-- telescope -->
<rect x="1636" y="315" width="24" height="24" fill="#151515"/>
<polygon points="1640,329 1654,320 1656,324 1642,333" fill="#eee"/>
<rect x="1652" y="318.5" width="5" height="7" transform="rotate(-30 1654.5 322)" fill="#eee"/>
<path d="M1646 330l-2 6M1647 330l0.5 6M1648 330l2 5.5" stroke="#eee" stroke-width="1.3"/>
<!-- stellarium -->
<rect x="1636" y="362" width="23" height="22" rx="2.5" fill="url(#stg)"/>
<path d="M1636 376Q1648 378 1659 385V384H1636Z" fill="#1b1b1b"/>
<path d="M1654 366A5 5 0 0 1 1650 373.5A4 4 0 0 0 1654 366Z" fill="#fff" stroke="#fff" stroke-width="0.8"/>
<circle cx="1639" cy="366" r="0.8" fill="#fff"/><circle cx="1641" cy="369" r="0.8" fill="#fff"/><circle cx="1643" cy="372" r="0.7" fill="#fff"/>
<!-- vlc -->
<polygon points="1645.5,410 1650.5,410 1656,427 1640,427" fill="#ff8800"/>
<polygon points="1644,416 1652,416 1653,420 1643,420" fill="#ddd"/>
<rect x="1637.5" y="426" width="21" height="5" rx="1.5" fill="#ff8800"/>
<!-- libreoffice -->
<polygon points="1638,455 1653,455 1658,460 1658,479 1638,479" fill="#fff" stroke="#777" stroke-width="1"/>
<polygon points="1652,455 1658,455 1658,461" fill="#777"/>
<!-- acrobat -->
<rect x="1637" y="503" width="22" height="22" rx="3" fill="#b30b00"/>
<path d="M1641 521c2-1 5-7 6-12c0.5-2-1-2-1 0c0 3 4 8 9 9c2 0.5 2-1 0-1c-3 0-8 1-12 3" fill="none" stroke="#fff" stroke-width="1.2"/>
<!-- google earth -->
<clipPath id="gec"><circle cx="1648" cy="561.5" r="11"/></clipPath>
<circle cx="1648" cy="561.5" r="11" fill="#e9e9ea"/>
<g clip-path="url(#gec)" fill="none" stroke="#8c96a8" stroke-width="2.6">
<path d="M1640 551Q1650 553 1660 560"/><path d="M1636 560Q1648 558 1660 569"/><path d="M1636 567Q1644 566 1650 573"/>
</g>
<rect x="1641.5" y="566.5" width="13" height="7" fill="#1e1e1e"/>
<text x="1648" y="572.6" font-size="7" fill="#fff" text-anchor="middle" font-family="Liberation Sans">Pro</text>
<!-- edge -->
<defs><linearGradient id="edg2" x1="0" y1="0" x2="1" y2="0.6"><stop offset="0" stop-color="#1fa4ec"/><stop offset="0.55" stop-color="#30c8d8"/><stop offset="1" stop-color="#62e05a"/></linearGradient></defs>
<circle cx="1648" cy="609" r="12" fill="url(#edg2)"/>
<path d="M1636.2 607.5Q1638 602 1645 602.5Q1651 603.5 1651.5 609Q1651.5 613 1656 614Q1659 614.5 1659.6 612.5A12 12 0 0 1 1636.2 607.5Z" fill="#0e70d2"/>
<path d="M1641 617Q1644 621 1652 620.5Q1657 619 1659.6 612.5Q1656 616 1650 615.5Q1644 615 1641 617Z" fill="#0a58b0"/>
<circle cx="1647.5" cy="610.5" r="3.2" fill="#1f2021"/>
<!-- tray -->
<path d="M1637.5 905.5L1632.5 911.5L1637.5 917.5" fill="none" stroke="#fff" stroke-width="1.1"/>
<path d="M1628.5 940.5a10 10 0 0 1 10-10M1630.5 941a7.5 7.5 0 0 1 7.5-7.5M1632.8 941.2a5 5 0 0 1 5-5" fill="none" stroke="#fff" stroke-width="1"/>
<circle cx="1639" cy="940.5" r="1.3" fill="#fff"/>
<path d="M1651.5 932.5h2.5l3.5-3.5v14l-3.5-3.5h-2.5z" fill="none" stroke="#fff" stroke-width="1"/>
<path d="M1659.5 933a4 4 0 0 1 0 7M1661.5 931a7 7 0 0 1 0 11M1663.5 929.5a9.5 9.5 0 0 1 0 14" fill="none" stroke="#fff" stroke-width="1"/>
<text x="1648.5" y="973" font-size="11.5" fill="#fff" text-anchor="middle" font-family="Liberation Sans">18:17</text>
<text x="1648.5" y="990" font-size="11.5" fill="#fff" text-anchor="middle" font-family="Liberation Sans">11/11/2020</text>
<path d="M1640 1013h16v13h-7l-3 3v-3h-6z" fill="#fff"/>
<path d="M1643 1016.5h10M1643 1019.5h10M1643 1022.5h6" stroke="#202020" stroke-width="1"/>
<circle cx="1655.5" cy="1028.5" r="8" fill="#262728" stroke="#8a8a8a" stroke-width="1"/>
<path d="M1656 1024v8M1653.5 1026l2.5-2" stroke="#fff" stroke-width="1.8" fill="none"/>
<rect x="1617" y="1045" width="63" height="1" fill="#888"/>
</svg>
</div>
</body></html>
